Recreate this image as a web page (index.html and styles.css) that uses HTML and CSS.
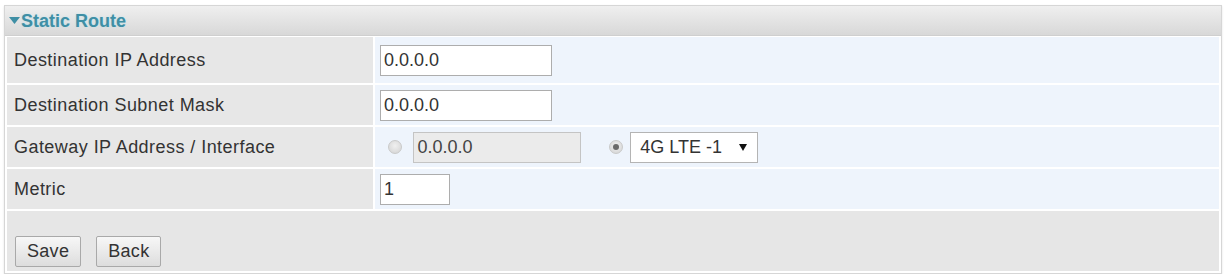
FILE: index.html
```html
<!DOCTYPE html>
<html lang="en">
<head>
	<meta charset="UTF-8">
	<title>Static Route</title>
	<link rel="stylesheet" href="styles.css">
</head>
<body>
	<div class="panel">
		<div class="panelTitle">
			<svg class="arrow" width="11" height="7" viewBox="0 0 11 7"><polygon points="0,0 11,0 5.5,7" fill="#3f8fa5"/></svg>Static Route
		</div>
		<table class="formTable">
			<tr class="first">
				<td class="label">Destination IP Address</td>
				<td class="value"><input type="text" class="txt" value="0.0.0.0"></td>
			</tr>
			<tr>
				<td class="label">Destination Subnet Mask</td>
				<td class="value"><input type="text" class="txt" value="0.0.0.0"></td>
			</tr>
			<tr>
				<td class="label">Gateway IP Address / Interface</td>
				<td class="value">
					<input type="radio" name="gw" class="radio first">
					<input type="text" class="txt gwTxt" value="0.0.0.0" disabled>
					<input type="radio" name="gw" class="radio" checked>
					<span class="selWrap">
						<select class="sel">
							<option>4G LTE -1</option>
						</select>
					</span>
				</td>
			</tr>
			<tr>
				<td class="label">Metric</td>
				<td class="value"><input type="text" class="txt metric" value="1"></td>
			</tr>
		</table>
		<div class="buttons">
			<input type="button" class="btn" value="Save">
			<input type="button" class="btn" value="Back">
		</div>
	</div>
</body>
</html>
```

FILE: styles.css
```css
* {
	box-sizing: border-box;
}
body{
	margin: 0px;
	background-color: #fff;
	font-family: "Liberation Sans", Arial, sans-serif;
	font-size: 18px;
	color: #333;
}
.panel{
	margin: 5px 7px 0px 4px;
	border: 1px solid #d6d6d6;
	padding: 0px;
	box-shadow: 0px 1px 2px #e4e4e4;
}
.panelTitle{
	height: 30px;
	padding: 5px 0px 0px 4px;
	background: linear-gradient(#efefef, #d8d8d8);
	border-bottom: 1px solid #cfcfcf;
	color: #3f8fa5;
	font-weight: bold;
	font-size: 18px;
	text-shadow: 0px 0px 2px #b8e2ec;
}
.arrow{
	vertical-align: 3px;
	margin-right: 1px;
}
.formTable{
	width: 100%;
	border-spacing: 2px 2px;
	margin-top: -1px;
}
.formTable td{
	height: 40px;
	padding: 0px 5px;
	letter-spacing: 0.45px;
}
.formTable tr.first td{
	height: 46px;
}
td.label{
	width: 366px;
	background-color: #e7e7e7;
	padding-left: 7px;
}
td.value{
	background-color: #eef4fc;
}
.txt{
	width: 172px;
	height: 31px;
	border: 1px solid #adadad;
	padding: 0px 3px;
	font-family: "Liberation Sans", Arial, sans-serif;
	font-size: 18px;
	color: #333;
	background-color: #fff;
	vertical-align: middle;
}
.gwTxt{
	width: 168px;
	background-color: #ebebeb;
	border-color: #c4c4c4;
	color: #444;
	margin-left: 6px;
}
.metric{
	width: 70px;
}
.radio{
	appearance: none;
	width: 14px;
	height: 14px;
	margin: 0px 0px 0px 22px;
	border: 1px solid #c9c9c9;
	border-radius: 50%;
	background: radial-gradient(circle at 50% 40%, #f0f0f0, #d2d2d2);
	vertical-align: middle;
	position: relative;
}
.radio.first{
	margin-left: 8px;
}
.radio:checked::after{
	content: "";
	position: absolute;
	left: 3px;
	top: 3px;
	width: 6px;
	height: 6px;
	border-radius: 50%;
	background-color: #6a6a6a;
}
.selWrap{
	position: relative;
	display: inline-block;
	margin-left: 2px;
	vertical-align: middle;
}
.selWrap::after{
	content: "";
	position: absolute;
	right: 11px;
	top: 12px;
	border-left: 4px solid transparent;
	border-right: 4px solid transparent;
	border-top: 7px solid #111;
}
.sel{
	appearance: none;
	width: 128px;
	height: 31px;
	border: 1px solid #b4b4b4;
	background-color: #fff;
	padding: 0px 0px 0px 9px;
	font-family: "Liberation Sans", Arial, sans-serif;
	font-size: 18px;
	color: #333;
	border-radius: 0px;
}
.buttons{
	height: 61px;
	margin: 0px 2px 1px 2px;
	background-color: #e6e6e6;
	padding: 25px 0px 0px 8px;
	border-bottom: 1px solid #fff;
}
.btn{
	height: 31px;
	padding: 0px 11px;
	margin-right: 10px;
	border: 1px solid #a9a9a9;
	border-radius: 2px;
	background: linear-gradient(#f7f7f7, #dddddd);
	font-family: "Liberation Sans", Arial, sans-serif;
	font-size: 18px;
	letter-spacing: 0.3px;
	color: #333;
}
```
